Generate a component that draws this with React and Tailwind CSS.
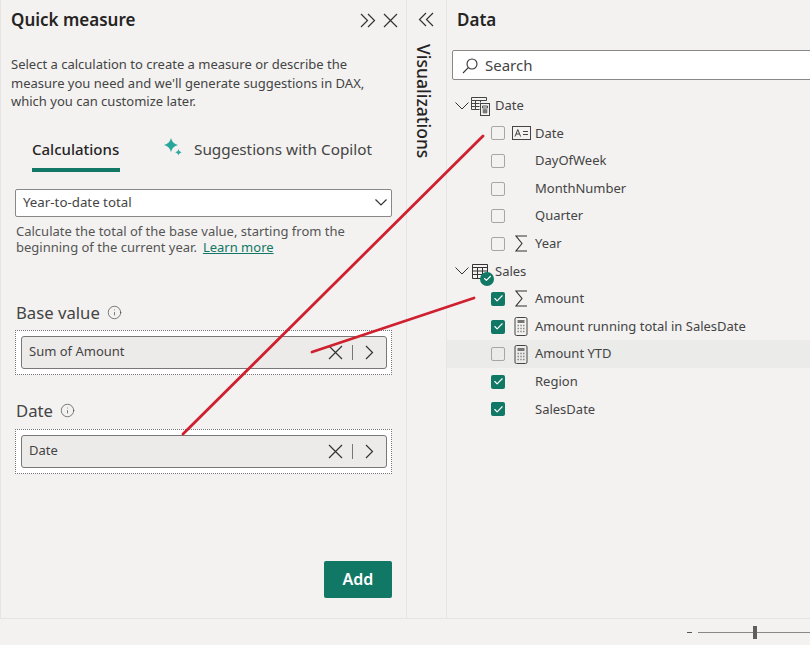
import { Check, Info } from 'lucide-react';

function Trazo({ w, h, d, width = 1.2, className }) {
  return (
    <svg className={`shrink-0 ${className || ''}`} width={w} height={h} viewBox={`0 0 ${w} ${h}`} fill="none" stroke="#333" strokeWidth={width}>
      <path d={d} />
    </svg>
  );
}

const IconoCerrar = ({ className }) => <Trazo w={15} h={15} d="M1 1l13 13M14 1 1 14" className={className} />;
const IconoDobleDer = () => <Trazo w={16} h={15} d="M1 1l6.500 6.500L1 14M8 1l6.500 6.500L8 14" />;
const IconoDobleIzq = ({ className }) => <Trazo w={16} h={15} d="M8 1 1.500 7.500 8 14M15 1 8.500 7.500 15 14" className={className} />;
const IconoAbajo = () => <Trazo w={14} h={8} d="M.5.500l6.500 6.500 6.500-6.500" width={1} />;
const IconoLista = () => <Trazo w={12} h={7} d="M.5.500l5.500 5.500 5.500-5.500" />;
const IconoSigue = () => <Trazo w={9} h={15} d="M1 1l6.500 6.500L1 14" />;
const IconoSigma = () => <Trazo w={13} h={17} d="M12 1H1l6 7.500L1 16h11" width={1.1} />;

function IconoLupa() {
  return (
    <svg width="16" height="16" viewBox="0 0 16 16" fill="none" stroke="#333" strokeWidth="1.1" className="shrink-0">
      <circle cx="10" cy="6" r="5" />
      <path d="M6.300 9.700 1 15" />
    </svg>
  );
}

function IconoFecha() {
  return (
    <svg width="21" height="20" viewBox="0 0 21 20" fill="none" stroke="#444" strokeWidth="1">
      <path d="M1.500 1.500h15v3h-15zM1.500 4.500v9h8M1.500 7.500h8M1.500 10.500h8M5.500 4.500v9M10.500 4.500v2" />
      <rect x="10.500" y="7.500" width="9" height="12" fill="#f3f2f1" />
      <path d="M12.500 10h5v2h-5zM12.500 14h5M12.500 16h5M14 13.500v4M16 13.500v4" strokeWidth="0.9" />
    </svg>
  );
}

function IconoTabla() {
  return (
    <svg width="16" height="15" viewBox="0 0 16 15" fill="none" stroke="#333" strokeWidth="1">
      <path d="M.5.500h15v14H.5zM.5 3.500h15M.5 7h15M.5 10.500h15M5.500 3.500v11M10.500 3.500v11" />
    </svg>
  );
}

function IconoCalc() {
  return (
    <svg width="14" height="19" viewBox="0 0 14 19" fill="none" stroke="#444">
      <rect x="1" y=".5" width="12" height="18" rx="1.500" />
      <rect x="3.500" y="3" width="7" height="3" fill="#777" stroke="none" />
      <path d="M3.500 8.500h1.500M6.300 8.500h1.500M9 8.500h1.500M3.500 11.500h1.500M6.300 11.500h1.500M9 11.500h1.500M3.500 14.500h1.500M6.300 14.500h1.500M9 14.500h1.500" strokeWidth="1.400" stroke="#888" />
    </svg>
  );
}

function IconoTexto() {
  return (
    <svg width="19" height="14" viewBox="0 0 19 14" fill="none" stroke="#444">
      <rect x=".5" y=".5" width="18" height="13" />
      <path d="M3 10.500 5.800 3.500l2.800 7M4 8h3.600M11 5.500h5M11 8.500h5" />
    </svg>
  );
}

function Casilla({ marcada }) {
  if (marcada) {
    return (
      <span className="grid place-items-center w-[14px] h-[14px] rounded-[2px] bg-[#117865] shrink-0">
        <Check size={11} color="#fff" strokeWidth={2.5} />
      </span>
    );
  }
  return <span className="w-[14px] h-[14px] rounded-[2px] border border-[#a8a6a4] shrink-0" />;
}

const CAMPOS_DATE = [
  { texto: 'Date', icono: <IconoTexto /> },
  { texto: 'DayOfWeek' },
  { texto: 'MonthNumber' },
  { texto: 'Quarter' },
  { texto: 'Year', icono: <IconoSigma /> },
];

const CAMPOS_SALES = [
  { texto: 'Amount', marcada: true, icono: <IconoSigma /> },
  { texto: 'Amount running total in SalesDate', marcada: true, icono: <IconoCalc /> },
  { texto: 'Amount YTD', icono: <IconoCalc />, resaltada: true },
  { texto: 'Region', marcada: true },
  { texto: 'SalesDate', marcada: true },
];

function Campo({ campo }) {
  return (
    <div className={`flex items-center h-[27.6px] pl-[44px] ${campo.resaltada ? 'bg-[#ebebea]' : ''}`}>
      <Casilla marcada={campo.marcada} />
      <span className="w-[22px] ml-[5px] flex justify-center shrink-0">{campo.icono}</span>
      <span className="ml-[3px] text-[13px] text-[#444]">{campo.texto}</span>
    </div>
  );
}

function Pozo({ texto, className }) {
  return (
    <div className={`mx-[14px] h-[45px] border border-dotted border-[#77757a] bg-white pl-[5px] pr-[4px] py-[5px] ${className}`}>
      <div className="h-full flex items-center rounded-[3px] border border-[#7a7876] bg-[#edebe9] pl-[7px] pr-[12px] text-[13px] text-[#444]">
        <span className="flex-1">{texto}</span>
        <IconoCerrar />
        <span className="w-px h-[15px] bg-[#777] mx-[9px]" />
        <span className="ml-[3px] flex"><IconoSigue /></span>
      </div>
    </div>
  );
}

export default function App() {
  return (
    <div className="relative w-[810px] h-[645px] overflow-hidden bg-[#f3f2f1] text-[#252423] font-['Noto_Sans',sans-serif]">
      <div className="flex h-[619px] border-b border-[#e6e5e3]">
        {/* panel de medida rapida */}
        <div className="w-[407px] shrink-0 border-x border-[#e6e5e3]">
          <div className="flex items-center h-[40px] pl-[10px] pr-[8px]">
            <h1 className="flex-1 text-[17px] font-semibold">Quick measure</h1>
            <IconoDobleDer />
            <IconoCerrar className="ml-[7px]" />
          </div>
          <p className="mt-[15px] ml-[10px] text-[13px] leading-[18.5px] text-[#444] w-[380px]">
            Select a calculation to create a measure or describe the measure you need and we'll generate suggestions in DAX, which you can customize later.
          </p>
          <div className="flex mt-[25px] ml-[31px] h-[34px] text-[15px]">
            <div className="w-[88px] h-[36px] border-b-[4px] border-[#117865] font-medium whitespace-nowrap leading-[26px]">Calculations</div>
            <svg className="ml-[43px] mt-[2px]" width="20" height="20" viewBox="0 0 20 20" fill="#2aa79b">
              <path d="M8 0c.9 3.800 3 5.900 7 7-4 1.100-6.100 3.200-7 7-.9-3.800-3-5.900-7-7 4-1.100 6.100-3.200 7-7z" />
              <path d="M15.500 11c.4 1.800 1.400 2.800 3.300 3.300-1.900.5-2.900 1.500-3.300 3.300-.4-1.800-1.400-2.800-3.300-3.300 1.900-.5 2.900-1.500 3.300-3.300z" />
            </svg>
            <span className="ml-[11px] text-[15.3px] text-[#444] whitespace-nowrap leading-[26px]">Suggestions with Copilot</span>
          </div>
          <div className="mt-[19px] mx-[14px] h-[28px] flex items-center justify-between rounded-[2px] border border-[#8a8886] bg-white pl-[7px] pr-[4px] text-[13.3px] text-[#444]">
            <span>Year-to-date total</span>
            <IconoLista />
          </div>
          <div className="mt-[6px] ml-[15px] w-[370px] text-[13px] leading-[16px] text-[#555]">
            <div>Calculate the total of the base value, starting from the</div>
            <div className="flex gap-[6px]">
              <span>beginning of the current year.</span>
              <span className="text-[#117865] underline">Learn more</span>
            </div>
          </div>
          <div className="mt-[48px] ml-[15px] flex items-center gap-[7px] h-[20px] text-[16.700px] text-[#444]">
            Base value <Info size={15} strokeWidth={1.1} color="#444" />
          </div>
          <Pozo texto="Sum of Amount" className="mt-[7px]" />
          <div className="mt-[26px] ml-[15px] flex items-center gap-[7px] h-[20px] text-[16.700px] text-[#444]">
            Date <Info size={15} strokeWidth={1.1} color="#444" />
          </div>
          <Pozo texto="Date" className="mt-[8px]" />
          <div className="flex justify-end mt-[87px] mr-[14px]">
            <button className="w-[68px] h-[37px] rounded-[2px] bg-[#117865] text-white text-[16px] font-semibold">Add</button>
          </div>
        </div>

        {/* pestana de visualizaciones */}
        <div className="w-[40px] shrink-0 border-r border-[#e6e5e3] flex flex-col items-center">
          <IconoDobleIzq className="mt-[12px] -ml-[1px]" />
          <span className="mt-[17px] -ml-[6px] text-[17.500px] leading-[20px] font-medium [writing-mode:vertical-rl]">Visualizations</span>
        </div>

        {/* panel de datos */}
        <div className="flex-1 min-w-0">
          <h2 className="ml-[10px] h-[40px] leading-[40px] text-[17px] font-semibold">Data</h2>
          <div className="ml-[5px] mt-[10px] w-[400px] h-[30px] flex items-center gap-[7px] rounded-[2px] border border-[#8a8886] bg-white pl-[9px] pt-[1px] text-[15px] text-[#444]">
            <IconoLupa />
            Search
          </div>
          <div className="mt-[12px]">
            <div className="flex items-center h-[27.6px] pl-[8px] text-[13px] text-[#444]">
              <IconoAbajo />
              <span className="ml-[1px] flex"><IconoFecha /></span>
              <span className="ml-[4px]">Date</span>
            </div>
            {CAMPOS_DATE.map((c) => <Campo key={c.texto} campo={c} />)}
            <div className="flex items-center h-[27.6px] pl-[8px] text-[13px] text-[#444]">
              <IconoAbajo />
              <span className="relative ml-[3px] flex">
                <IconoTabla />
                <span className="absolute left-[8px] top-[8px] grid place-items-center w-[14px] h-[14px] rounded-full bg-[#117865]">
                  <Check size={9} color="#fff" strokeWidth={3} />
                </span>
              </span>
              <span className="ml-[7px]">Sales</span>
            </div>
            {CAMPOS_SALES.map((c) => <Campo key={c.texto} campo={c} />)}
          </div>
        </div>
      </div>

      {/* zoom */}
      <div className="flex items-center justify-end h-[26px] pl-[687px]">
        <span className="w-[5px] h-px bg-[#555]" />
        <div className="relative flex-1 ml-[6px] h-px bg-[#8a8886]">
          <span className="absolute left-[55px] -top-[6px] w-[4px] h-[13px] bg-[#605e5c]" />
        </div>
      </div>

      {/* lineas rojas dibujadas encima */}
      <svg className="absolute inset-0 pointer-events-none" width="810" height="645" fill="none" stroke="#cf2030" strokeWidth="2.800" strokeLinecap="round">
        <path d="M483 136 183 434" />
        <path d="M474 298 312 352" />
      </svg>
    </div>
  );
}
